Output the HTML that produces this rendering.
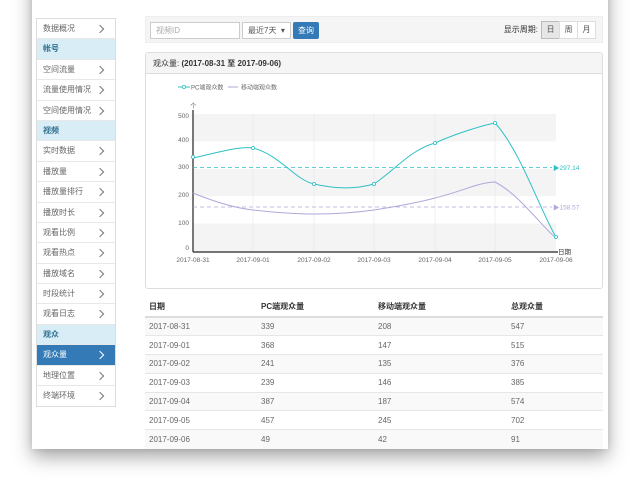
<!DOCTYPE html>
<html><head><meta charset="utf-8"><style>
*{box-sizing:border-box;margin:0;padding:0}
body{width:640px;height:501px;background:#fff;font-family:"Liberation Sans","Noto Sans CJK SC",sans-serif;font-size:8px;color:#555;position:relative;overflow:hidden}
.card{position:absolute;left:32px;top:-30px;width:576px;height:479px;background:#fff;box-shadow:0 8px 18px rgba(0,0,0,.35),0 0 6px rgba(0,0,0,.1)}
.side{position:absolute;left:36px;top:18px;width:80px;border:1px solid #ddd}
.side div{height:20.4px;line-height:20px;padding-left:6px;border-bottom:1px solid #e8e8e8;position:relative;color:#666}
.side div.a::after{content:"";position:absolute;right:12px;top:7px;width:5px;height:5px;border-top:1px solid #777;border-right:1px solid #777;transform:rotate(45deg)}
.side div.h{background:#d9edf7;color:#31708f;font-weight:bold}
.side div.s{background:#337ab7;color:#fff}
.side div.s::after{border-color:#fff}
.tool{position:absolute;left:145px;top:16px;width:458px;height:27px;background:#f5f5f5;border:1px solid #eee}
.inp{position:absolute;top:5px;height:17px;border:1px solid #ccc;background:#fff;line-height:15px;padding-left:5px;color:#aaa}
.btn{position:absolute;left:147px;top:5px;width:26px;height:17px;background:#337ab7;color:#fff;line-height:17px;text-align:center;border-radius:2px}
.per{position:absolute;right:6px;top:4px;display:flex}
.per span{width:19px;height:18px;border:1px solid #ddd;background:#fff;text-align:center;line-height:16px;margin-left:-1px}
.panel{position:absolute;left:145px;top:52px;width:458px;height:237px;border:1px solid #ddd;border-radius:3px}
.ph{height:21px;background:#f5f5f5;border-bottom:1px solid #ddd;line-height:21px;padding-left:7px;color:#333}
table{position:absolute;left:145px;top:297px;width:458px;border-collapse:collapse}
td,th{text-align:left;height:18.8px;padding-left:4px;color:#666;font-weight:normal}
th{height:20px;color:#333;font-weight:bold;border-bottom:2px solid #ddd}
tr:nth-child(even) td{background:#f9f9f9}
td{border-top:1px solid #e6e6e6}
</style></head><body>
<div class="card"></div>
<div class="side">
<div class="a">数据概况</div><div class="h">帐号</div><div class="a">空间流量</div><div class="a">流量使用情况</div><div class="a">空间使用情况</div><div class="h">视频</div><div class="a">实时数据</div><div class="a">播放量</div><div class="a">播放量排行</div><div class="a">播放时长</div><div class="a">观看比例</div><div class="a">观看热点</div><div class="a">播放域名</div><div class="a">时段统计</div><div class="a">观看日志</div><div class="h">观众</div><div class="a s">观众量</div><div class="a">地理位置</div><div class="a" style="border-bottom:0">终端环境</div>
</div>
<div class="tool">
<div class="inp" style="left:4px;width:90px">视频ID</div>
<div class="inp" style="left:96px;width:49px;color:#555">最近7天 &nbsp;▾</div>
<div class="btn">查询</div>
<div class="per"><b style="font-weight:normal;line-height:18px;margin-right:4px;color:#333">显示周期:</b><span style="background:#e6e6e6;border-color:#bbb">日</span><span>周</span><span>月</span></div>
</div>
<div class="panel"><div class="ph">观众量: <b>(2017-08-31 至 2017-09-06)</b></div></div>
<svg style="position:absolute;left:0;top:0" width="640" height="501" font-family="Liberation Sans,Noto Sans CJK SC,sans-serif" font-size="6.5">
<rect x="193" y="114" width="363" height="27.4" fill="#f4f4f4"/>
<rect x="193" y="168.8" width="363" height="27.4" fill="#f4f4f4"/>
<rect x="193" y="223.6" width="363" height="27.4" fill="#f4f4f4"/>
<g stroke="#e8e8e8" stroke-width="0.6"><line x1="253" y1="114" x2="253" y2="251"/><line x1="314" y1="114" x2="314" y2="251"/><line x1="374" y1="114" x2="374" y2="251"/><line x1="435" y1="114" x2="435" y2="251"/><line x1="495" y1="114" x2="495" y2="251"/></g>
<line x1="193" y1="110" x2="193" y2="252" stroke="#222" stroke-width="1.2"/>
<line x1="193" y1="252" x2="558" y2="252" stroke="#222" stroke-width="1.2"/>
<g fill="#666" text-anchor="end"><text x="189" y="118">500</text><text x="189" y="142">400</text><text x="189" y="169">300</text><text x="189" y="197">200</text><text x="189" y="225">100</text><text x="189" y="250">0</text></g>
<text x="190" y="108" fill="#666">个</text>
<g fill="#666" text-anchor="middle"><text x="193" y="262">2017-08-31</text><text x="253" y="262">2017-09-01</text><text x="314" y="262">2017-09-02</text><text x="374" y="262">2017-09-03</text><text x="435" y="262">2017-09-04</text><text x="495" y="262">2017-09-05</text><text x="556" y="262">2017-09-06</text></g>
<text x="558" y="254" fill="#333">日期</text>
<line x1="193" y1="167.5" x2="552" y2="167.5" stroke="#2fc0c4" stroke-dasharray="4,3" stroke-width="0.8"/>
<line x1="193" y1="207" x2="552" y2="207" stroke="#b3a6db" stroke-dasharray="4,3" stroke-width="0.8"/>
<text x="553" y="170" fill="#2fc0c4">▶297.14</text><text x="553" y="209.5" fill="#b3a6db">▶158.57</text>
<path d="M193,158 C220,152 240,146 253,148 C280,155 295,180 314,184 C340,190 360,188 374,184 C395,170 410,150 435,143 C455,134 480,126 495,123 C520,150 540,210 556,237" fill="none" stroke="#2fc0c4" stroke-width="1"/>
<path d="M193,193 C215,202 235,208 253,210 C280,213 300,214 314,214 C340,214 360,212 374,210 C400,206 420,202 435,198 C460,192 480,182 495,182 C520,195 540,225 556,238" fill="none" stroke="#b3a6db" stroke-width="1"/>
<g fill="#fff" stroke="#2fc0c4" stroke-width="0.8"><circle cx="193" cy="157" r="1.6"/><circle cx="253" cy="148" r="1.6"/><circle cx="314" cy="184" r="1.6"/><circle cx="374" cy="184" r="1.6"/><circle cx="435" cy="143" r="1.6"/><circle cx="495" cy="123" r="1.6"/><circle cx="556" cy="237" r="1.6"/></g>
<line x1="178" y1="87" x2="190" y2="87" stroke="#2fc0c4"/><circle cx="184" cy="87" r="1.6" fill="#fff" stroke="#2fc0c4" stroke-width="0.8"/>
<text x="191" y="89.5" fill="#666" font-size="6">PC端观众数</text>
<line x1="228" y1="87" x2="238" y2="87" stroke="#b3a6db"/>
<text x="241" y="89.5" fill="#666" font-size="6">移动端观众数</text>
</svg>
<table>
<tr><th>日期</th><th>PC端观众量</th><th>移动端观众量</th><th>总观众量</th></tr>
<tr><td style="width:112px">2017-08-31</td><td style="width:117px">339</td><td style="width:133px">208</td><td>547</td></tr>
<tr><td>2017-09-01</td><td>368</td><td>147</td><td>515</td></tr>
<tr><td>2017-09-02</td><td>241</td><td>135</td><td>376</td></tr>
<tr><td>2017-09-03</td><td>239</td><td>146</td><td>385</td></tr>
<tr><td>2017-09-04</td><td>387</td><td>187</td><td>574</td></tr>
<tr><td>2017-09-05</td><td>457</td><td>245</td><td>702</td></tr>
<tr><td>2017-09-06</td><td>49</td><td>42</td><td>91</td></tr>
</table>
</body></html>
